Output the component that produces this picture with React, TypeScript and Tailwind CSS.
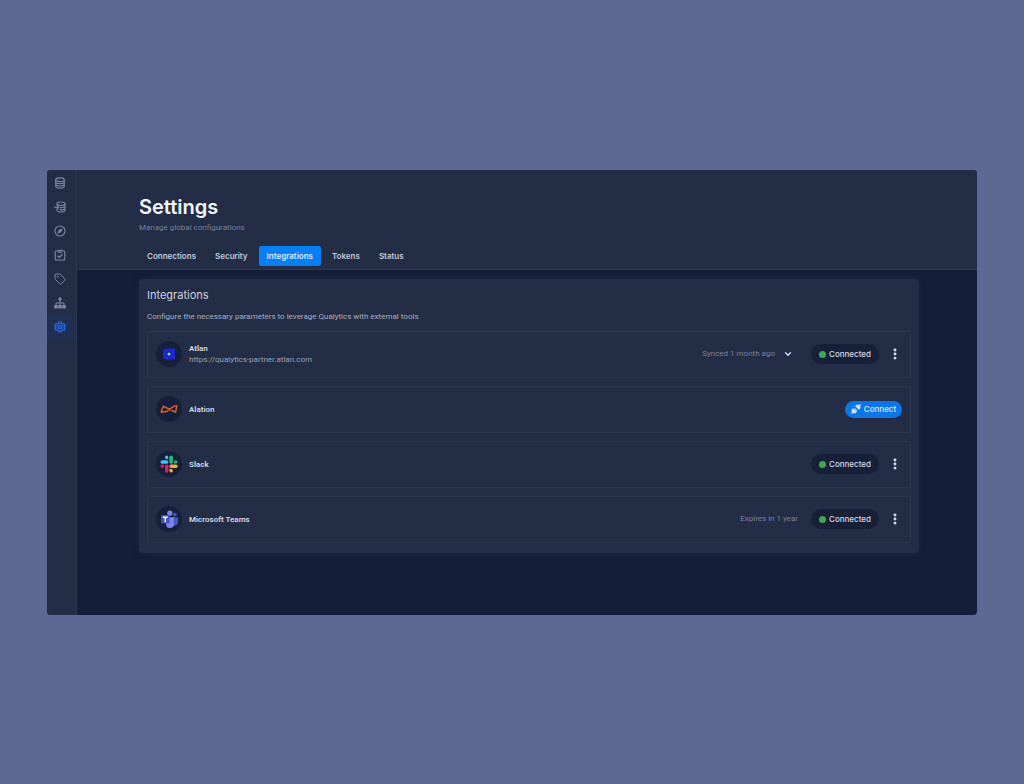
import type { ReactNode } from "react";
import { ChevronDown, EllipsisVertical, Tag } from "lucide-react";

type Integration = {
  name: string;
  url?: string;
  note?: string;
  expandable?: boolean;
  connected: boolean;
  logo: ReactNode;
};

function DatabaseIcon() {
  return (
    <svg viewBox="0 0 24 24" className="size-3" fill="none" stroke="currentColor" strokeWidth="2.200">
      <ellipse cx="12" cy="5.500" rx="8.500" ry="3.700" />
      <path d="M3.500 5.500v13c0 2 3.800 3.700 8.500 3.700s8.500-1.700 8.500-3.700v-13M3.500 10c0 2 3.800 3.400 8.500 3.400s8.500-1.400 8.500-3.400M3.500 14.500c0 2 3.800 3.400 8.500 3.400s8.500-1.400 8.500-3.400" />
    </svg>
  );
}

function DatabaseImportIcon() {
  return (
    <svg viewBox="0 0 24 24" className="size-3" fill="none" stroke="currentColor" strokeWidth="2.200">
      <ellipse cx="14" cy="5.500" rx="8" ry="3.500" />
      <path d="M6 5.500V9M22 5.500v13c0 2-3.600 3.500-8 3.500s-8-1.500-8-3.500V16M12 13.200c5 .3 10-1 10-3.400M11 17.600c5.500.6 11-.6 11-3.200" />
      <path d="M0 12.500h9M6 9l3.500 3.500L6 16" />
    </svg>
  );
}

function CompassIcon() {
  return (
    <svg viewBox="0 0 24 24" className="size-3" fill="none" stroke="currentColor" strokeWidth="2.200">
      <circle cx="12" cy="12" r="10" />
      <path d="m17.500 6.500-3.200 7.800-7.800 3.200 3.200-7.800z" fill="currentColor" stroke="none" />
    </svg>
  );
}

function ChecklistIcon() {
  return (
    <svg viewBox="0 0 24 24" className="size-3" fill="none" stroke="currentColor" strokeWidth="2.200" strokeLinejoin="round">
      <rect x="2.500" y="4" width="19" height="18" rx="1.500" />
      <path d="M8 4V2.500h8V4M8 6.500h8M7 13.500l3.500 3.500 6.500-6.500" />
    </svg>
  );
}

function SitemapIcon() {
  return (
    <svg viewBox="0 0 24 24" className="size-3" fill="none" stroke="currentColor" strokeWidth="2">
      <circle cx="12" cy="4" r="2.500" fill="currentColor" />
      <path d="M12 6v12M4 17v-5h16v5" />
      <rect x="1.500" y="17" width="5" height="5" fill="currentColor" />
      <rect x="9.500" y="17" width="5" height="5" fill="currentColor" />
      <rect x="17.500" y="17" width="5" height="5" fill="currentColor" />
    </svg>
  );
}

function CogIcon() {
  return (
    <svg viewBox="0 0 24 24" className="size-3" fill="none" stroke="currentColor" strokeWidth="2.200" strokeLinejoin="round">
      <path
        d="M9.500 2h5l.7 3 1.800 1 3-.9 2.500 4.300L20.300 11.500v1l2.200 2.100-2.500 4.300-3-.9-1.800 1-.7 3h-5l-.7-3L7 18l-3 .9-2.500-4.300 2.200-2.100v-1L1.500 9.400 4 5.100 7 6l1.800-1z"
        fill="#1b4295"
      />
      <circle cx="12" cy="12" r="3.500" />
    </svg>
  );
}

function AtlanLogo() {
  return (
    <svg viewBox="0 0 26 26" className="size-[26px]" aria-hidden="true">
      <path d="M10.500 7.500H19v11h-8.500A3.500 3.500 0 0 1 7 15v-4a3.500 3.500 0 0 1 3.500-3.500z" fill="#2026d2" />
      <circle cx="13" cy="13" r="2.500" fill="#14206a" />
      <circle cx="13" cy="13" r="1.600" fill="#62e1fb" />
    </svg>
  );
}

function AlationLogo() {
  return (
    <svg viewBox="0 0 26 26" className="size-[26px]" fill="none" stroke="#d0602f" strokeWidth="1.500" strokeLinejoin="round" aria-hidden="true">
      <path d="M7.300 10.300 19.600 16.200 20.800 9.800 17.800 10.300 10.300 15.600 5.200 16.200z" />
    </svg>
  );
}

function SlackLogo() {
  return (
    <svg viewBox="0 0 26 26" className="size-[26px]" aria-hidden="true">
      <g fill="#36c5f0">
        <rect x="4.500" y="9.200" width="7.900" height="3.500" rx="1.700" />
        <path d="M10.600 4.500a1.700 1.700 0 0 1 1.700 1.700v1.700h-1.700a1.700 1.700 0 0 1 0-3.400z" />
      </g>
      <g fill="#2eb67d">
        <rect x="13.400" y="4.500" width="3.500" height="8.200" rx="1.700" />
        <path d="M21.500 10.900a1.700 1.700 0 0 1-1.700 1.700h-1.700v-1.700a1.700 1.700 0 0 1 3.400 0z" />
      </g>
      <g fill="#ecb22e">
        <rect x="13.500" y="13.500" width="8.200" height="3.500" rx="1.700" />
        <path d="M15.200 21.500a1.700 1.700 0 0 1-1.700-1.700v-1.700h1.700a1.700 1.700 0 0 1 0 3.400z" />
      </g>
      <g fill="#e01e5a">
        <rect x="9" y="13.500" width="3.500" height="8.200" rx="1.700" />
        <path d="M4.500 15.200a1.700 1.700 0 0 1 1.700-1.700h1.700v1.700a1.700 1.700 0 0 1-3.400 0z" />
      </g>
    </svg>
  );
}

function TeamsLogo() {
  return (
    <svg viewBox="0 0 26 26" className="size-[26px]" aria-hidden="true">
      <circle cx="18.800" cy="8.600" r="1.900" fill="#4357bd" />
      <path d="M16.500 11.200h5.500v5a3.600 3.600 0 0 1-5.500 3z" fill="#4357bd" />
      <circle cx="13.800" cy="7.200" r="2.600" fill="#7b83eb" />
      <path d="M10 11.200h8v6.300a4 4 0 0 1-8 1z" fill="#7b83eb" />
      <rect x="5" y="9" width="8.500" height="8.500" rx="1" fill="#4254b5" />
      <path d="M6.800 11.200h5M9.300 11.200v5" stroke="#fff" strokeWidth="1.400" />
    </svg>
  );
}

function PlugIcon() {
  return (
    <svg viewBox="0 0 24 24" className="size-[10px]" fill="currentColor" stroke="currentColor" strokeWidth="2" aria-hidden="true">
      <path d="m11 5 8 8 1.500-1.500a4.500 4.500 0 0 0 0-6l-2-2a4.500 4.500 0 0 0-6 0zM5 11l8 8-1.500 1.500a4.500 4.500 0 0 1-6 0l-2-2a4.500 4.500 0 0 1 0-6z" />
      <path d="m19 5 4-4M5 19l-4 4M8 14l3-3M11 17l3-3" strokeWidth="3" />
    </svg>
  );
}

const navItems = [
  { label: "Datastores", icon: <DatabaseIcon /> },
  { label: "Sources", icon: <DatabaseImportIcon /> },
  { label: "Explore", icon: <CompassIcon /> },
  { label: "Checks", icon: <ChecklistIcon /> },
  { label: "Tags", icon: <Tag className="size-3" /> },
  { label: "Lineage", icon: <SitemapIcon /> },
  { label: "Settings", icon: <CogIcon />, active: true },
];

const tabs = ["Connections", "Security", "Integrations", "Tokens", "Status"];

const integrations: Integration[] = [
  {
    name: "Atlan",
    url: "https://qualytics-partner.atlan.com",
    note: "Synced 1 month ago",
    expandable: true,
    connected: true,
    logo: <AtlanLogo />,
  },
  { name: "Alation", connected: false, logo: <AlationLogo /> },
  { name: "Slack", connected: true, logo: <SlackLogo /> },
  { name: "Microsoft Teams", note: "Expires in 1 year", connected: true, logo: <TeamsLogo /> },
];

function Sidebar() {
  return (
    <nav aria-label="Main" className="flex w-[30px] shrink-0 flex-col border-r border-[#2b3650] bg-[#232d46] pt-px">
      {navItems.map((item) => (
        <a
          key={item.label}
          href="#"
          aria-label={item.label}
          aria-current={item.active ? "page" : undefined}
          className={`flex h-6 items-center justify-center pr-1 ${
            item.active ? "bg-[#213052] text-[#2f68dc]" : "text-[#7d88a3]"
          }`}
        >
          {item.icon}
        </a>
      ))}
    </nav>
  );
}

function IntegrationRow({ item }: { item: Integration }) {
  return (
    <li className="flex h-[47px] items-center rounded-xs border border-[#2d3751] px-2">
      <span className="mr-[7px] flex size-[26px] shrink-0 items-center justify-center rounded-full bg-[#17203a]">
        {item.logo}
      </span>
      <div className="min-w-0 flex-1 leading-[11px]">
        <h3 className="text-[8px] font-semibold text-[#d5dbe8]">{item.name}</h3>
        {item.url ? (
          <a href={item.url} className="block text-[8px] text-[#98a2b8]">
            {item.url}
          </a>
        ) : null}
      </div>
      {item.note ? <span className="mr-[13px] text-[8px] text-[#78839c]">{item.note}</span> : null}
      {item.expandable ? (
        <button type="button" aria-label="Show sync details" className="mr-[18px] -ml-[5px] text-[#e2e7f0]">
          <ChevronDown className="size-[10px]" strokeWidth={3} />
        </button>
      ) : null}
      {item.connected ? (
        <>
          <span className="flex h-5 w-[68px] items-center justify-center gap-[3px] rounded-full bg-[#172039] font-['Inter',sans-serif] text-[8px] font-medium text-[#d5dbe8]">
            <span className="size-[7px] rounded-full bg-[#43a555]" />
            Connected
          </span>
          <button type="button" aria-label={`${item.name} options`} className="ml-[9px] text-[#dfe5ee]">
            <EllipsisVertical className="size-[14px]" strokeWidth={3} />
          </button>
        </>
      ) : (
        <button
          type="button"
          className="flex h-[17px] w-[57px] items-center justify-center gap-[3px] rounded-full bg-[#0c76e8] font-['Inter',sans-serif] text-[8px] font-medium text-[#d9eafc]"
        >
          <PlugIcon />
          Connect
        </button>
      )}
    </li>
  );
}

export default function App() {
  return (
    <div className="flex min-h-screen items-center bg-[#5c6992] px-[47px] font-['Roboto',sans-serif]">
      <div className="flex min-h-[445px] w-full overflow-hidden rounded bg-[#141e38]">
        <Sidebar />
        <main className="min-w-0 flex-1">
          <header className="border-b border-[#2b3650] bg-[#232d46] px-[62px] pt-6 pb-[3px]">
            <h1 className="font-['Inter',sans-serif] text-[20px] leading-[26px] font-semibold text-[#f2f6fc]">
              Settings
            </h1>
            <p className="mt-[2px] text-[8px] leading-3 text-[#78839c]">Manage global configurations</p>
            <div role="tablist" className="mt-3 flex gap-[3px]">
              {tabs.map((tab) => (
                <button
                  key={tab}
                  type="button"
                  role="tab"
                  aria-selected={tab === "Integrations"}
                  className={`h-5 rounded-xs px-2 font-['Inter',sans-serif] text-[8px] font-semibold ${
                    tab === "Integrations" ? "bg-[#067ff6] text-[#dcecff]" : "text-[#c2cad9]"
                  }`}
                >
                  {tab}
                </button>
              ))}
            </div>
          </header>
          <section className="mt-[9px] mr-[58px] ml-[62px] rounded bg-[#232d46] px-2 pt-[9px] pb-[10px] shadow-[0_0_5px_#1f2b48]">
            <h2 className="font-['Inter',sans-serif] text-[11px] leading-[14px] text-[#cbd2e0]">Integrations</h2>
            <p className="mt-[9px] text-[8px] leading-3 text-[#a7b0c4]">
              Configure the necessary parameters to leverage Qualytics with external tools
            </p>
            <ul className="mt-2 flex flex-col gap-2">
              {integrations.map((item) => (
                <IntegrationRow key={item.name} item={item} />
              ))}
            </ul>
          </section>
        </main>
      </div>
    </div>
  );
}
